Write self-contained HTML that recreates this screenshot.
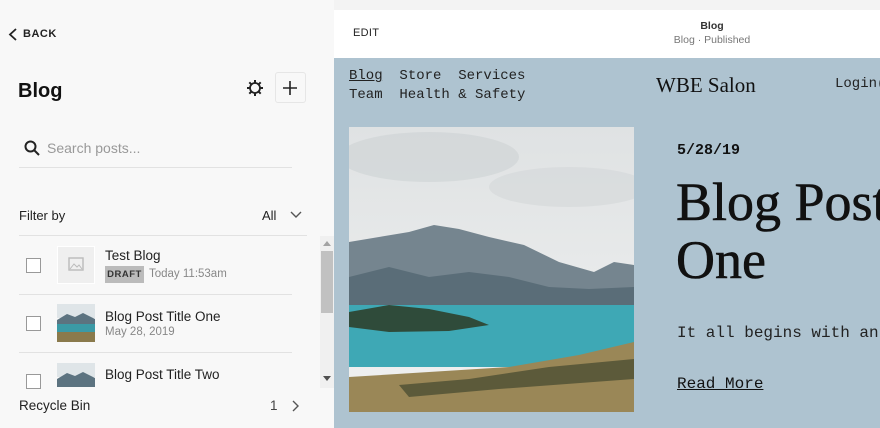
<!DOCTYPE html>
<html><head><style>
*{margin:0;padding:0;box-sizing:border-box}
body{width:880px;height:428px;overflow:hidden;background:#f3f3f3;font-family:"Liberation Sans",sans-serif;position:relative}
.l{position:absolute;left:0;top:0;width:334px;height:428px;background:#f8f8f8}
.a{position:absolute}
.mono{font-family:"Liberation Mono",monospace}
.serif{font-family:"Liberation Serif",serif}
.cb{position:absolute;left:26px;width:15px;height:15px;border:1px solid #999;background:#fff}
.t{position:absolute;left:105px;font-size:13.5px;color:#222}
.s{position:absolute;left:105px;font-size:11.5px;color:#888}
.hr{position:absolute;left:19px;width:273px;height:1px;background:#e2e2e2}
</style></head><body>
<div class="l">
<svg class="a" style="left:8px;top:28px" width="10" height="13"><path d="M8 1L2 6.5L8 12" stroke="#222" stroke-width="1.8" fill="none"/></svg>
<div class="a" style="left:23px;top:28px;font-size:11px;font-weight:bold;letter-spacing:.5px;color:#222">BACK</div>
<div class="a" style="left:18px;top:80px;font-size:20px;font-weight:bold;color:#111">Blog</div>
<svg class="a" style="left:246px;top:79px" width="18" height="18" viewBox="0 0 18 18"><circle cx="9" cy="9" r="5" stroke="#222" stroke-width="1.8" fill="none"/><g stroke="#222" stroke-width="2"><path d="M9 1v3M9 14v3M1 9h3M14 9h3M3.3 3.3l2 2M12.7 12.7l2 2M3.3 14.7l2-2M12.7 5.3l2-2"/></g></svg>
<div class="a" style="left:275px;top:72px;width:31px;height:31px;border:1px solid #e6e6e6;border-radius:3px;background:#f8f8f8"></div>
<svg class="a" style="left:282px;top:80px" width="16" height="16"><path d="M8 1v14M1 8h14" stroke="#222" stroke-width="1.6"/></svg>
<svg class="a" style="left:24px;top:140px" width="16" height="16"><circle cx="6.5" cy="6.5" r="5" stroke="#222" stroke-width="2" fill="none"/><path d="M10 10l5 5" stroke="#222" stroke-width="2"/></svg>
<div class="a" style="left:47px;top:140px;font-size:14px;color:#999">Search posts...</div>
<div class="hr" style="top:167px"></div>
<div class="a" style="left:19px;top:208px;font-size:13px;color:#222">Filter by</div>
<div class="a" style="left:262px;top:208px;font-size:13px;color:#222">All</div>
<svg class="a" style="left:290px;top:211px" width="12" height="8"><path d="M1 1l5 5 5-5" stroke="#555" stroke-width="1.4" fill="none"/></svg>
<div class="hr" style="top:235px;width:288px"></div>
<div class="cb" style="top:258px"></div>
<div class="a" style="left:57px;top:246px;width:38px;height:38px;background:#efefef;border:1px solid #fff"></div>
<svg class="a" style="left:68px;top:257px" width="16" height="14"><rect x="1" y="1" width="14" height="12" stroke="#bbb" stroke-width="1.4" fill="none"/><path d="M2 12l4-5 3 3 2-2 3 4" stroke="#bbb" fill="none"/></svg>
<div class="t" style="top:248px">Test Blog</div>
<div class="a" style="left:105px;top:266px;width:39px;height:17px;background:#bbb;font-size:9.5px;font-weight:bold;color:#333;letter-spacing:.5px;line-height:17px;text-align:center">DRAFT</div>
<div class="s" style="left:149px;top:268px">Today 11:53am</div>
<div class="hr" style="top:294px"></div>
<div class="cb" style="top:316px"></div>
<svg class="a" style="left:57px;top:304px" width="38" height="38"><rect width="38" height="14" fill="#dfe5e8"/><path d="M0 16l10-6 8 3 8-4 12 6v8H0z" fill="#5c7380"/><rect y="20" width="38" height="8" fill="#3b9aa6"/><rect y="28" width="38" height="10" fill="#8a7a4c"/></svg>
<div class="t" style="top:309px">Blog Post Title One</div>
<div class="s" style="top:326px">May 28, 2019</div>
<div class="hr" style="top:352px"></div>
<div class="cb" style="top:374px"></div>
<svg class="a" style="left:57px;top:363px" width="38" height="24"><rect width="38" height="14" fill="#dfe5e8"/><path d="M0 16l10-6 8 3 8-4 12 6v9H0z" fill="#5c7380"/></svg>
<div class="t" style="top:367px">Blog Post Title Two</div>
<div class="a" style="left:0;top:389px;width:334px;height:39px;background:#f8f8f8"></div>
<div class="a" style="left:19px;top:398px;font-size:13.5px;color:#222">Recycle Bin</div>
<div class="a" style="left:270px;top:398px;font-size:13.5px;color:#444">1</div>
<svg class="a" style="left:292px;top:400px" width="8" height="12"><path d="M1 1l5 5-5 5" stroke="#555" stroke-width="1.4" fill="none"/></svg>
<div class="a" style="left:320px;top:236px;width:14px;height:152px;background:#f0f0f0"></div>
<div class="a" style="left:321px;top:251px;width:12px;height:62px;background:#c1c1c1"></div>
<svg class="a" style="left:323px;top:241px" width="8" height="5"><path d="M0 5L4 0 8 5z" fill="#a3a3a3"/></svg>
<svg class="a" style="left:323px;top:376px" width="8" height="5"><path d="M0 0L4 5 8 0z" fill="#505050"/></svg>
</div>
<div class="a" style="left:334px;top:10px;width:546px;height:48px;background:#fff"></div>
<div class="a" style="left:353px;top:27px;font-size:11px;color:#222;letter-spacing:.3px">EDIT</div>
<div class="a" style="left:612px;top:20px;width:200px;text-align:center;font-size:10.5px;font-weight:bold;color:#333">Blog</div>
<div class="a" style="left:612px;top:34px;width:200px;text-align:center;font-size:10.5px;color:#777">Blog · Published</div>
<div class="a" style="left:334px;top:58px;width:546px;height:370px;background:#aec3d0"></div>
<div class="a mono" style="left:349px;top:67px;font-size:14px;line-height:19px;color:#222;white-space:pre"><u>Blog</u>  Store  Services
Team  Health &amp; Safety</div>
<div class="a serif" style="left:656px;top:73px;font-size:21px;color:#111">WBE Salon</div>
<div class="a mono" style="left:835px;top:76px;font-size:14px;color:#222">Login(</div>
<svg class="a" style="left:349px;top:127px" width="285" height="285" viewBox="0 0 285 285">
<defs><linearGradient id="sk" x1="0" y1="0" x2="0" y2="1"><stop offset="0" stop-color="#dfe2e3"/><stop offset="1" stop-color="#f0f1f1"/></linearGradient></defs>
<rect width="285" height="285" fill="url(#sk)"/>
<ellipse cx="80" cy="30" rx="90" ry="25" fill="#cdd2d4" opacity=".6"/>
<ellipse cx="220" cy="60" rx="80" ry="20" fill="#d3d7d9" opacity=".6"/>
<path d="M0 115 L30 110 L60 105 L85 98 L110 102 L140 110 L175 118 L210 135 L245 145 L265 135 L285 138 L285 185 L0 185Z" fill="#75858f"/>
<path d="M0 150 L40 140 L80 150 L120 145 L160 150 L200 160 L240 162 L285 160 L285 185 L0 185Z" fill="#5a6d78"/>
<rect y="178" width="285" height="62" fill="#3ea8b5"/>
<path d="M0 185 L40 178 L80 182 L120 190 L140 198 L100 204 L40 205 L0 200Z" fill="#2f4b3a"/>
<path d="M0 250 L80 245 L160 240 L230 228 L285 215 L285 285 L0 285Z" fill="#9a8757"/>
<path d="M50 258 L120 252 L200 240 L285 232 L285 252 L150 262 L60 270Z" fill="#5c5a3a"/>
</svg>
<div class="a mono" style="left:677px;top:142px;font-size:15px;font-weight:bold;color:#111">5/28/19</div>
<div class="a serif" style="left:676px;top:173px;font-size:54px;line-height:58px;color:#111;white-space:nowrap;-webkit-text-stroke:.6px #111">Blog Post<br>One</div>
<div class="a mono" style="left:677px;top:324px;font-size:16px;color:#222;white-space:nowrap">It all begins with an</div>
<div class="a mono" style="left:677px;top:375px;font-size:16px;color:#111;text-decoration:underline">Read More</div>
</body></html>
